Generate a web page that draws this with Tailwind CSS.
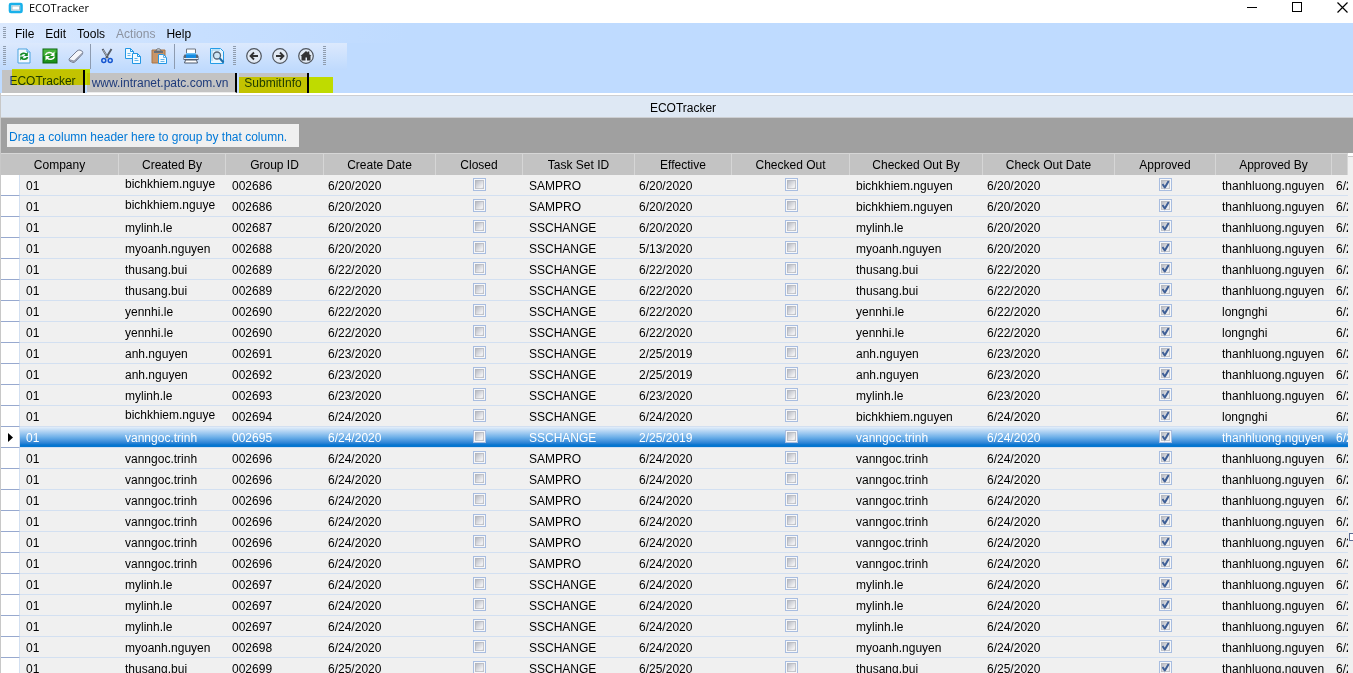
<!DOCTYPE html>
<html lang="en">
<head>
<meta charset="utf-8">
<title>ECOTracker</title>
<script src="https://cdn.jsdelivr.net/npm/@tailwindcss/browser@4"></script>
</head>
<body class="h-screen overflow-hidden bg-white font-['Liberation_Sans',Arial,sans-serif] text-xs text-black">
<div class="flex h-full flex-col">
  <header class="flex h-[23px] shrink-0 items-start justify-between">
    <div class="flex items-center gap-1.5 pl-2">
      <svg class="h-3.5 w-[15px]" viewBox="0 0 15 14"><rect x="2" y="3" width="11.500" height="8" rx="1" fill="#fff" stroke="#19b1ea" stroke-width="2.600"/><rect x="4" y="5" width="7.500" height="4" fill="#fff" stroke="#8fb4c4" stroke-width=".8"/></svg>
      <h1 class="font-['Open_Sans',sans-serif] text-[11px] leading-4">ECOTracker</h1>
    </div>
    <div class="flex">
      <button aria-label="Minimize" class="flex h-3.5 w-[45px] items-center justify-center"><svg class="size-[11px]" viewBox="0 0 11 11"><path d="M0 5.500H10" stroke="#000"/></svg></button>
      <button aria-label="Maximize" class="flex h-3.5 w-[45px] items-center justify-center"><svg class="size-[11px]" viewBox="0 0 11 11"><rect x=".5" y=".5" width="9" height="9" fill="none" stroke="#000"/></svg></button>
      <button aria-label="Close" class="flex h-3.5 w-[33px] items-center justify-end pr-[5px]"><svg class="size-[11px]" viewBox="0 0 11 11"><path d="M.5 .5l10 10M10.500 .5l-10 10" stroke="#000" stroke-width="1.200"/></svg></button>
    </div>
  </header>

  <div class="flex h-[70px] shrink-0 flex-col bg-[#bfdbff]">
    <nav class="flex h-5 items-center gap-[11px] bg-linear-to-r from-[#dbe9fe] via-[#c7dfff] via-15% to-[#bfdbff] to-30% pl-[3px]">
      <span class="-mr-0.5 h-3 w-[3px] bg-[repeating-linear-gradient(#8f9cae_0_1px,transparent_1px_2px)]"></span>
      <button class="pt-0.5 leading-5">File</button>
      <button class="pt-0.5 leading-5">Edit</button>
      <button class="pt-0.5 leading-5">Tools</button>
      <button class="pt-0.5 leading-5 text-[#8c93a0]" disabled>Actions</button>
      <button class="pt-0.5 leading-5">Help</button>
    </nav>

    <div class="flex h-[27px] w-[347px] items-center bg-linear-to-b from-[#dce9fd] to-[#bfdafd] pb-px">
      <span class="mr-[5px] ml-[3px] h-5 w-[3px] bg-[repeating-linear-gradient(#8f9cae_0_1px,transparent_1px_2px)]"></span>
      <button aria-label="Refresh" class="flex w-[26px] justify-center"><svg class="size-4" viewBox="0 0 16 16"><path d="M2 1h9l3 3v11H2z" fill="#f4faff" stroke="#4aa3df"/><path d="M11 1v3h3" fill="#cfe8fa" stroke="#4aa3df"/><path d="M4.500 7.500C5 5 9 4.500 10.500 6.500M11.500 9C11 11.500 7 12 5.500 10" fill="none" stroke="#128a25" stroke-width="1.700"/><path d="M11.800 4v4H8z M4.200 12.500v-4H8z" fill="#128a25"/></svg></button>
      <button aria-label="Refresh all" class="flex w-[26px] justify-center"><svg class="size-4" viewBox="0 0 16 16"><rect x="1" y="1" width="14" height="14" fill="#1c931c" stroke="#0b620f"/><path d="M1.500 1.500h13v3l-13 4z" fill="#48b23e"/><path d="M3.500 7C4.500 4 9 3.800 11 6M12.500 8.500C11.500 12 7 12 5 10" fill="none" stroke="#fff" stroke-width="1.500"/><path d="M12.500 3.500v4.500H8z M3.500 12.500V8H8z" fill="#fff"/></svg></button>
      <button aria-label="Clear" class="flex w-[26px] justify-center"><svg class="size-4" viewBox="0 0 16 16"><path d="M1 11L9 3Q10 2 12 2L14.500 3.500Q15 4.500 14.500 6L7.500 13.500Q6.500 14.500 5 14.500L1.500 13z" fill="#f4f6fa" stroke="#737c91"/><path d="M1.500 11.200L6 12.500 14.300 4.500V6L7.300 13.400Q6.500 14.300 5 14L1.600 12.800z" fill="#9199ac"/></svg></button>
      <span class="mr-[3px] ml-px h-[25px] w-px bg-[#8d9bb0]"></span>
      <button aria-label="Cut" class="flex w-[26px] justify-center"><svg class="size-4" viewBox="0 0 16 16"><path d="M3.500 1l5.500 9M12.500 1L7 10" stroke="#555c66" stroke-width="1.900"/><path d="M4 2l4 6" stroke="#e8edf2" stroke-width=".6"/><circle cx="4.800" cy="12.500" r="2" fill="none" stroke="#1455d0" stroke-width="1.500"/><circle cx="11.200" cy="12.500" r="2" fill="none" stroke="#1455d0" stroke-width="1.500"/></svg></button>
      <button aria-label="Copy" class="flex w-[26px] justify-center"><svg class="size-4" viewBox="0 0 16 16"><g fill="#f2faff" stroke="#2397e4"><path d="M.5 .5h5l3 3v7h-8z"/><path d="M5.500 .5v3h3" fill="none"/><path d="M7.500 5.500h5l3 3v7h-8z"/><path d="M12.500 5.500v3h3" fill="none"/></g><path d="M2.500 5.500h3M2.500 7.500h3M9.500 10.500h3M9.500 12.500h4" stroke="#64b3e8"/></svg></button>
      <button aria-label="Paste" class="flex w-[26px] justify-center"><svg class="size-4" viewBox="0 0 16 16"><path d="M1 2h13v13H1z" fill="#c89568" stroke="#a87447"/><path d="M3 3h9v2H3z" fill="#6a7078"/><path d="M5 3c0-3 5-3 5 0z" fill="#d7dadd" stroke="#666"/><path d="M7.500 6.500h5l3 3v6h-8z" fill="#f2faff" stroke="#2397e4"/><path d="M12.500 6.500v3h3M9.500 11.500h4M9.500 13.500h4" fill="none" stroke="#64b3e8"/></svg></button>
      <span class="mr-[3px] ml-0.5 h-[25px] w-px bg-[#8d9bb0]"></span>
      <button aria-label="Print" class="flex w-[26px] justify-center"><svg class="size-4" viewBox="0 0 16 16"><path d="M3.500 1h9v6h-9z" fill="#fff" stroke="#6c7480"/><path d="M1.500 6.500h13l1 2V12H.5V8.500z" fill="#5b6676"/><path d="M3 5h10v5H3z" fill="#168be0"/><path d="M3 5h10v1.500H3z" fill="#6dc0f5"/><path d="M1 10.500h14" stroke="#e9f0f8"/><path d="M2.500 12h11l1 3h-13z" fill="#fff" stroke="#4f5b6c"/></svg></button>
      <button aria-label="Print preview" class="flex w-[26px] justify-center"><svg class="size-4" viewBox="0 0 16 16"><path d="M1.500 .5h10l3 3v12h-13z" fill="#e8f6ff" stroke="#249ce6"/><path d="M3 13V2h8" fill="none" stroke="#91ccef"/><circle cx="8" cy="7.500" r="3.500" fill="#cde5f5" stroke="#536477" stroke-width="1.300"/><path d="M10.500 10l4 4.500" stroke="#246ba3" stroke-width="2"/></svg></button>
      <span class="mr-[5px] ml-[3px] h-5 w-[3px] bg-[repeating-linear-gradient(#8f9cae_0_1px,transparent_1px_2px)]"></span>
      <button aria-label="Back" class="flex w-[26px] justify-center"><svg class="size-4" viewBox="0 0 16 16"><circle cx="8" cy="8" r="7.300" fill="#e2eaf4" stroke="#50565f" stroke-width="1.200"/><path d="M12 8H5M8 4.500L4.500 8 8 11.500" fill="none" stroke="#333" stroke-width="1.800"/></svg></button>
      <button aria-label="Forward" class="flex w-[26px] justify-center"><svg class="size-4" viewBox="0 0 16 16"><circle cx="8" cy="8" r="7.300" fill="#e2eaf4" stroke="#50565f" stroke-width="1.200"/><path d="M4 8h7M8 4.500L11.500 8 8 11.500" fill="none" stroke="#333" stroke-width="1.800"/></svg></button>
      <button aria-label="Home" class="flex w-[26px] justify-center"><svg class="size-4" viewBox="0 0 16 16"><circle cx="8" cy="8" r="7.300" fill="#e2eaf4" stroke="#50565f" stroke-width="1.200"/><path d="M2.500 8L8 3l1.700 1.600V3.500h1.600v2.700L13.500 8H12.500v4.500H9V9.500H7.500v3h-4V8z" fill="#333"/></svg></button>
      <span class="ml-1 h-5 w-[3px] bg-[repeating-linear-gradient(#8f9cae_0_1px,transparent_1px_2px)]"></span>
    </div>

    <div class="relative flex h-[23px] items-end gap-0.5 pl-0.5 text-[#1f3b7b]">
      <button class="h-[23px] w-[83px] border-r-2 border-black bg-[#c3c3c3] pb-0.5">ECOTracker</button>
      <button class="h-5 w-[150px] border-r-2 border-b border-r-black border-b-[#ececec] bg-[#c3c3c3] pr-0.5 whitespace-nowrap">www.intranet.patc.com.vn</button>
      <button class="h-5 w-[70px] border-r-2 border-black bg-[#c3c3c3]">SubmitInfo</button>
      <span class="pointer-events-none absolute -top-px left-3 h-4 w-[78px] bg-[#ffff00] mix-blend-multiply"></span>
      <span class="pointer-events-none absolute top-[7px] left-[239px] h-4 w-[94px] bg-[#ffff00] mix-blend-multiply"></span>
    </div>
  </div>

  <main class="flex min-h-0 flex-1 flex-col border-l border-[#c8c8c8] pt-0.5">
    <h2 class="h-[23px] shrink-0 border-y border-[#cdcfd2] bg-[#dee8f4] pl-3 text-center leading-6">ECOTracker</h2>
    <div class="h-[35px] shrink-0 bg-[#a0a0a0] pt-1.5 pl-1.5">
      <p class="h-[23px] w-[292px] bg-[#f0f0f0] pl-0.5 leading-[26px] whitespace-nowrap text-[#0078d7]">Drag a column header here to group by that column.</p>
    </div>
    <div class="flex min-h-0 flex-1">
      <div class="min-w-0 flex-1 overflow-hidden bg-[#f0f0f0]">
        <table class="w-full table-fixed border-separate border-spacing-0">
          <colgroup><col class="w-[19px]"><col class="w-[99px]"><col class="w-[107px]"><col class="w-[98px]"><col class="w-[112px]"><col class="w-[87px]"><col class="w-[112px]"><col class="w-[97px]"><col class="w-[118px]"><col class="w-[133px]"><col class="w-[132px]"><col class="w-[101px]"><col class="w-[116px]"><col></colgroup>
          <thead><tr id="head"></tr></thead>
          <tbody id="rows"></tbody>
        </table>
      </div>
      <div class="flex w-[5px] shrink-0 flex-col justify-between bg-[#f0f0f0]">
        <span class="h-1 border-b border-[#c8c8c8] bg-white"></span>
        <button aria-label="Expand panel" class="mb-[132px] ml-px h-2 w-1 border border-r-0 border-[#5b6b94] bg-white"></button>
      </div>
    </div>
  </main>
</div>
<script>
const columns = ['Company','Created By','Group ID','Create Date','Closed','Task Set ID','Effective','Checked Out','Checked Out By','Check Out Date','Approved','Approved By'];
const th = 'h-[22px] border-t border-r border-[#d6d6d6] bg-[#c3c3c3] p-0 text-center font-normal leading-5 whitespace-nowrap';
document.getElementById('head').innerHTML =
  columns.map((c, i) => `<th scope="col" ${i ? '' : 'colspan="2"'} class="${th}">${c}</th>`).join('') + `<th class="${th}"></th>`;

const B = 'bichkhiem.nguyen', M = 'mylinh.le', O = 'myoanh.nguyen', T = 'thusang.bui', Y = 'yennhi.le', A = 'anh.nguyen', V = 'vanngoc.trinh';
const L = 'thanhluong.nguyen', N = 'longnghi', P = 'SAMPRO', S = 'SSCHANGE';
const data = [
  [B,'002686','6/20/2020',P,'6/20/2020',L],[B,'002686','6/20/2020',P,'6/20/2020',L],
  [M,'002687','6/20/2020',S,'6/20/2020',L],[O,'002688','6/20/2020',S,'5/13/2020',L],
  [T,'002689','6/22/2020',S,'6/22/2020',L],[T,'002689','6/22/2020',S,'6/22/2020',L],
  [Y,'002690','6/22/2020',S,'6/22/2020',N],[Y,'002690','6/22/2020',S,'6/22/2020',N],
  [A,'002691','6/23/2020',S,'2/25/2019',L],[A,'002692','6/23/2020',S,'2/25/2019',L],
  [M,'002693','6/23/2020',S,'6/23/2020',L],[B,'002694','6/24/2020',S,'6/24/2020',N],
  [V,'002695','6/24/2020',S,'2/25/2019',L],[V,'002696','6/24/2020',P,'6/24/2020',L],
  [V,'002696','6/24/2020',P,'6/24/2020',L],[V,'002696','6/24/2020',P,'6/24/2020',L],
  [V,'002696','6/24/2020',P,'6/24/2020',L],[V,'002696','6/24/2020',P,'6/24/2020',L],
  [V,'002696','6/24/2020',P,'6/24/2020',L],[M,'002697','6/24/2020',S,'6/24/2020',L],
  [M,'002697','6/24/2020',S,'6/24/2020',L],[M,'002697','6/24/2020',S,'6/24/2020',L],
  [O,'002698','6/24/2020',S,'6/24/2020',L],[T,'002699','6/25/2020',S,'6/25/2020',L]
];
const selected = 12;
const cell = 'h-[21px] overflow-hidden border-b border-[#d3e0f1] p-0 whitespace-nowrap';
const td = (v, pad = 'pl-1.5 pt-0.5 leading-[18px]') => `<td class="${cell} ${pad}">${v}</td>`;
const dateTd = v => td(v, 'pl-1 pt-0.5 leading-[18px]');
const box = (label, on) => `<td class="${cell}"><label class="mx-auto -mt-px grid size-[13px] place-items-center">
  <input type="checkbox" aria-label="${label}" ${on ? 'checked' : ''} class="peer col-start-1 row-start-1 size-[13px] appearance-none border border-[#a8bde0] p-px [background:linear-gradient(135deg,#aeb2bc,#f2f2f4_75%,#d4d6dc)_content-box,#f7f8fa]">
  <svg class="pointer-events-none invisible col-start-1 row-start-1 size-[11px] peer-checked:visible" viewBox="0 0 11 11"><path d="M2.500 5L4.800 8.500 8.800 1.800" fill="none" stroke="#3f5f96" stroke-width="2"/></svg>
  <span class="pointer-events-none col-start-1 row-start-1 size-[9px] border border-[#b4b7be]/70"></span></label></td>`;
document.getElementById('rows').innerHTML = data.map((r, i) => {
  const [by, group, date, task, eff, app] = r;
  const long = by === B;
  return `<tr class="${i === selected ? 'bg-linear-to-b from-[#e3eefa] via-[#6aaee8] via-50% to-[#0475cf] to-85% text-white' : ''}">
    <td class="h-[21px] border-r border-b border-r-[#d3e0f1] border-b-[#97a9cf] bg-white p-0">${i === selected ? '<svg class="ml-1.5 h-[9px] w-1.5" viewBox="0 0 6 9"><path d="M1 0v9l5-4.500z"/></svg>' : ''}</td>
    ${td('01')}${long ? td('bichkhiem.nguye', 'pl-1.5 pb-0.5 leading-[18px]') : td(by)}${td(group)}${dateTd(date)}${box('Closed', false)}${td(task)}${dateTd(eff)}${box('Checked out', false)}${td(by)}${dateTd(date)}${box('Approved', true)}${td(app)}${dateTd(date)}</tr>`;
}).join('');
</script>
</body>
</html>
